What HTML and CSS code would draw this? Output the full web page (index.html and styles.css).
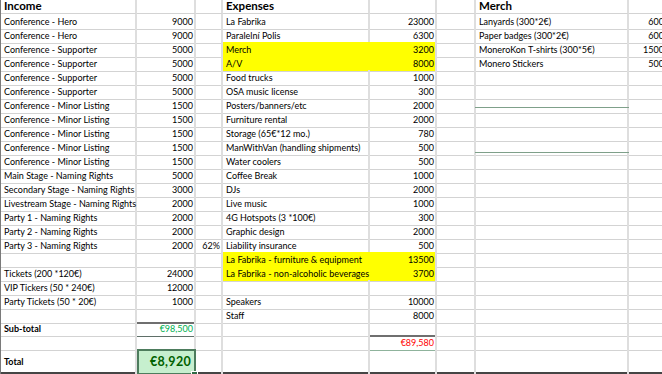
FILE: index.html
```html
<!DOCTYPE html>
<html lang="en">
<head>
<meta charset="utf-8">
<title>Budget</title>
<link rel="stylesheet" href="styles.css">
</head>
<body>
<div class="sheet">
  <div class="row head"><div class="c">Income</div><div class="c"></div><div class="c"></div><div class="c">Expenses</div><div class="c"></div><div class="c"></div><div class="c">Merch</div><div class="c"></div></div>
  <div class="row"><div class="c">Conference - Hero</div><div class="c n">9000</div><div class="c"></div><div class="c">La Fabrika</div><div class="c n">23000</div><div class="c"></div><div class="c">Lanyards (300*2€)</div><div class="c n">600</div></div>
  <div class="row"><div class="c">Conference - Hero</div><div class="c n">9000</div><div class="c"></div><div class="c">Paralelní Polis</div><div class="c n">6300</div><div class="c"></div><div class="c">Paper badges (300*2€)</div><div class="c n">600</div></div>
  <div class="row"><div class="c">Conference - Supporter</div><div class="c n">5000</div><div class="c"></div><div class="c hl hl-top">Merch</div><div class="c n hl hl-top">3200</div><div class="c"></div><div class="c">MoneroKon T-shirts (300*5€)</div><div class="c n">1500</div></div>
  <div class="row"><div class="c">Conference - Supporter</div><div class="c n">5000</div><div class="c"></div><div class="c hl">A/V</div><div class="c n hl">8000</div><div class="c"></div><div class="c">Monero Stickers</div><div class="c n">500</div></div>
  <div class="row"><div class="c">Conference - Supporter</div><div class="c n">5000</div><div class="c"></div><div class="c">Food trucks</div><div class="c n">1000</div><div class="c"></div><div class="c"></div><div class="c"></div></div>
  <div class="row"><div class="c">Conference - Supporter</div><div class="c n">5000</div><div class="c"></div><div class="c">OSA music license</div><div class="c n">300</div><div class="c"></div><div class="c"></div><div class="c"></div></div>
  <div class="row"><div class="c">Conference - Minor Listing</div><div class="c n">1500</div><div class="c"></div><div class="c">Posters/banners/etc</div><div class="c n">2000</div><div class="c"></div><div class="c"></div><div class="c"></div></div>
  <div class="row"><div class="c">Conference - Minor Listing</div><div class="c n">1500</div><div class="c"></div><div class="c">Furniture rental</div><div class="c n">2000</div><div class="c"></div><div class="c"></div><div class="c"></div></div>
  <div class="row"><div class="c">Conference - Minor Listing</div><div class="c n">1500</div><div class="c"></div><div class="c">Storage (65€*12 mo.)</div><div class="c n">780</div><div class="c"></div><div class="c"></div><div class="c"></div></div>
  <div class="row"><div class="c">Conference - Minor Listing</div><div class="c n">1500</div><div class="c"></div><div class="c">ManWithVan (handling shipments)</div><div class="c n">500</div><div class="c"></div><div class="c"></div><div class="c"></div></div>
  <div class="row"><div class="c">Conference - Minor Listing</div><div class="c n">1500</div><div class="c"></div><div class="c">Water coolers</div><div class="c n">500</div><div class="c"></div><div class="c"></div><div class="c"></div></div>
  <div class="row"><div class="c">Main Stage - Naming Rights</div><div class="c n">5000</div><div class="c"></div><div class="c">Coffee Break</div><div class="c n">1000</div><div class="c"></div><div class="c"></div><div class="c"></div></div>
  <div class="row"><div class="c">Secondary Stage - Naming Rights</div><div class="c n">3000</div><div class="c"></div><div class="c">DJs</div><div class="c n">2000</div><div class="c"></div><div class="c"></div><div class="c"></div></div>
  <div class="row"><div class="c">Livestream Stage - Naming Rights</div><div class="c n">2000</div><div class="c"></div><div class="c">Live music</div><div class="c n">1000</div><div class="c"></div><div class="c"></div><div class="c"></div></div>
  <div class="row"><div class="c">Party 1 - Naming Rights</div><div class="c n">2000</div><div class="c"></div><div class="c">4G Hotspots (3 *100€)</div><div class="c n">300</div><div class="c"></div><div class="c"></div><div class="c"></div></div>
  <div class="row"><div class="c">Party 2 - Naming Rights</div><div class="c n">2000</div><div class="c"></div><div class="c">Graphic design</div><div class="c n">2000</div><div class="c"></div><div class="c"></div><div class="c"></div></div>
  <div class="row"><div class="c">Party 3 - Naming Rights</div><div class="c n">2000</div><div class="c n">62%</div><div class="c">Liability insurance</div><div class="c n">500</div><div class="c"></div><div class="c"></div><div class="c"></div></div>
  <div class="row"><div class="c"></div><div class="c"></div><div class="c"></div><div class="c hl hl-top">La Fabrika - furniture &amp; equipment</div><div class="c n hl hl-top">13500</div><div class="c"></div><div class="c"></div><div class="c"></div></div>
  <div class="row"><div class="c">Tickets (200 *120€)</div><div class="c n">24000</div><div class="c"></div><div class="c hl">La Fabrika - non-alcoholic beverages</div><div class="c n hl">3700</div><div class="c"></div><div class="c"></div><div class="c"></div></div>
  <div class="row"><div class="c">VIP Tickers (50 * 240€)</div><div class="c n">12000</div><div class="c"></div><div class="c"></div><div class="c"></div><div class="c"></div><div class="c"></div><div class="c"></div></div>
  <div class="row"><div class="c">Party Tickets (50 * 20€)</div><div class="c n">1000</div><div class="c"></div><div class="c">Speakers</div><div class="c n">10000</div><div class="c"></div><div class="c"></div><div class="c"></div></div>
  <div class="row"><div class="c"></div><div class="c"></div><div class="c"></div><div class="c">Staff</div><div class="c n">8000</div><div class="c"></div><div class="c"></div><div class="c"></div></div>
  <div class="row short"><div class="c b">Sub-total</div><div class="c n sum sub">€98,500</div><div class="c"></div><div class="c"></div><div class="c"></div><div class="c"></div><div class="c"></div><div class="c"></div></div>
  <div class="row"><div class="c"></div><div class="c"></div><div class="c"></div><div class="c"></div><div class="c n sum exp">€89,580</div><div class="c"></div><div class="c"></div><div class="c"></div></div>
  <div class="row tall"><div class="c b">Total</div><div class="c n total">€8,920</div><div class="c"></div><div class="c"></div><div class="c"></div><div class="c"></div><div class="c"></div><div class="c"></div></div>
  <div class="sheet-end"></div>
  <div class="rule rule-1"></div>
  <div class="rule rule-2"></div>
</div>
</body>
</html>
```

FILE: styles.css
```css
html, body {
  margin: 0;
  padding: 0;
  background: #ffffff;
  overflow: hidden;
}

.sheet {
  position: relative;
  width: 680px;
  border-left: 1px solid #7a7a7a;
  font-family: Lato, "Liberation Sans", sans-serif;
  font-size: 9px;
  color: #000000;
}

.row {
  display: grid;
  grid-template-columns: 136px 59px 27px 147px 67px 39px 153px 38px;
  height: 14px;
}

.c {
  box-sizing: border-box;
  height: 100%;
  padding: 0 1px 0 3px;
  border-right: 2px solid #dedede;
  border-bottom: 1px solid #d3d3d3;
  line-height: 15px;
  white-space: nowrap;
  position: relative;
}

.n {
  text-align: right;
  padding: 0 1px 0 1px;
}

.head .c {
  font-size: 11.5px;
  font-weight: 700;
  line-height: 12.5px;
}

.b {
  font-weight: 700;
}

.hl {
  background: #ffff00;
}
.hl.hl-top {
  border-bottom-color: #ffff00;
}
.c.hl:nth-child(4) {
  border-right-color: #ffff00;
}

.short {
  height: 13px;
}
.short .c {
  line-height: 14px;
}

.sum {
  box-shadow: inset 0 2px 0 #6f6f6f;
}
.sub {
  color: #00b050;
  border-bottom-color: #5f6f68;
}
.exp {
  color: #ff0000;
  border-bottom-color: #8fb39c;
}

.tall {
  height: 23px;
}
.tall .c {
  line-height: 25px;
}

.total {
  background: #c6efce;
  color: #006100;
  font-size: 12.5px;
  font-weight: 700;
  line-height: 24px;
  padding-right: 3px;
  letter-spacing: 0.3px;
  outline: 2px solid #4d7c5d;
  outline-offset: -2px;
}
.total::after {
  content: "";
  position: absolute;
  right: -4px;
  bottom: -4px;
  width: 5px;
  height: 5px;
  background: #2f6b45;
  border: 1px solid #ffffff;
}

.sheet-end {
  height: 2px;
  background: #454545;
}

.rule {
  position: absolute;
  left: 474px;
  width: 154px;
  height: 1px;
  background: #7fa08a;
}
.rule-1 { top: 107px; }
.rule-2 { top: 152px; }
```
